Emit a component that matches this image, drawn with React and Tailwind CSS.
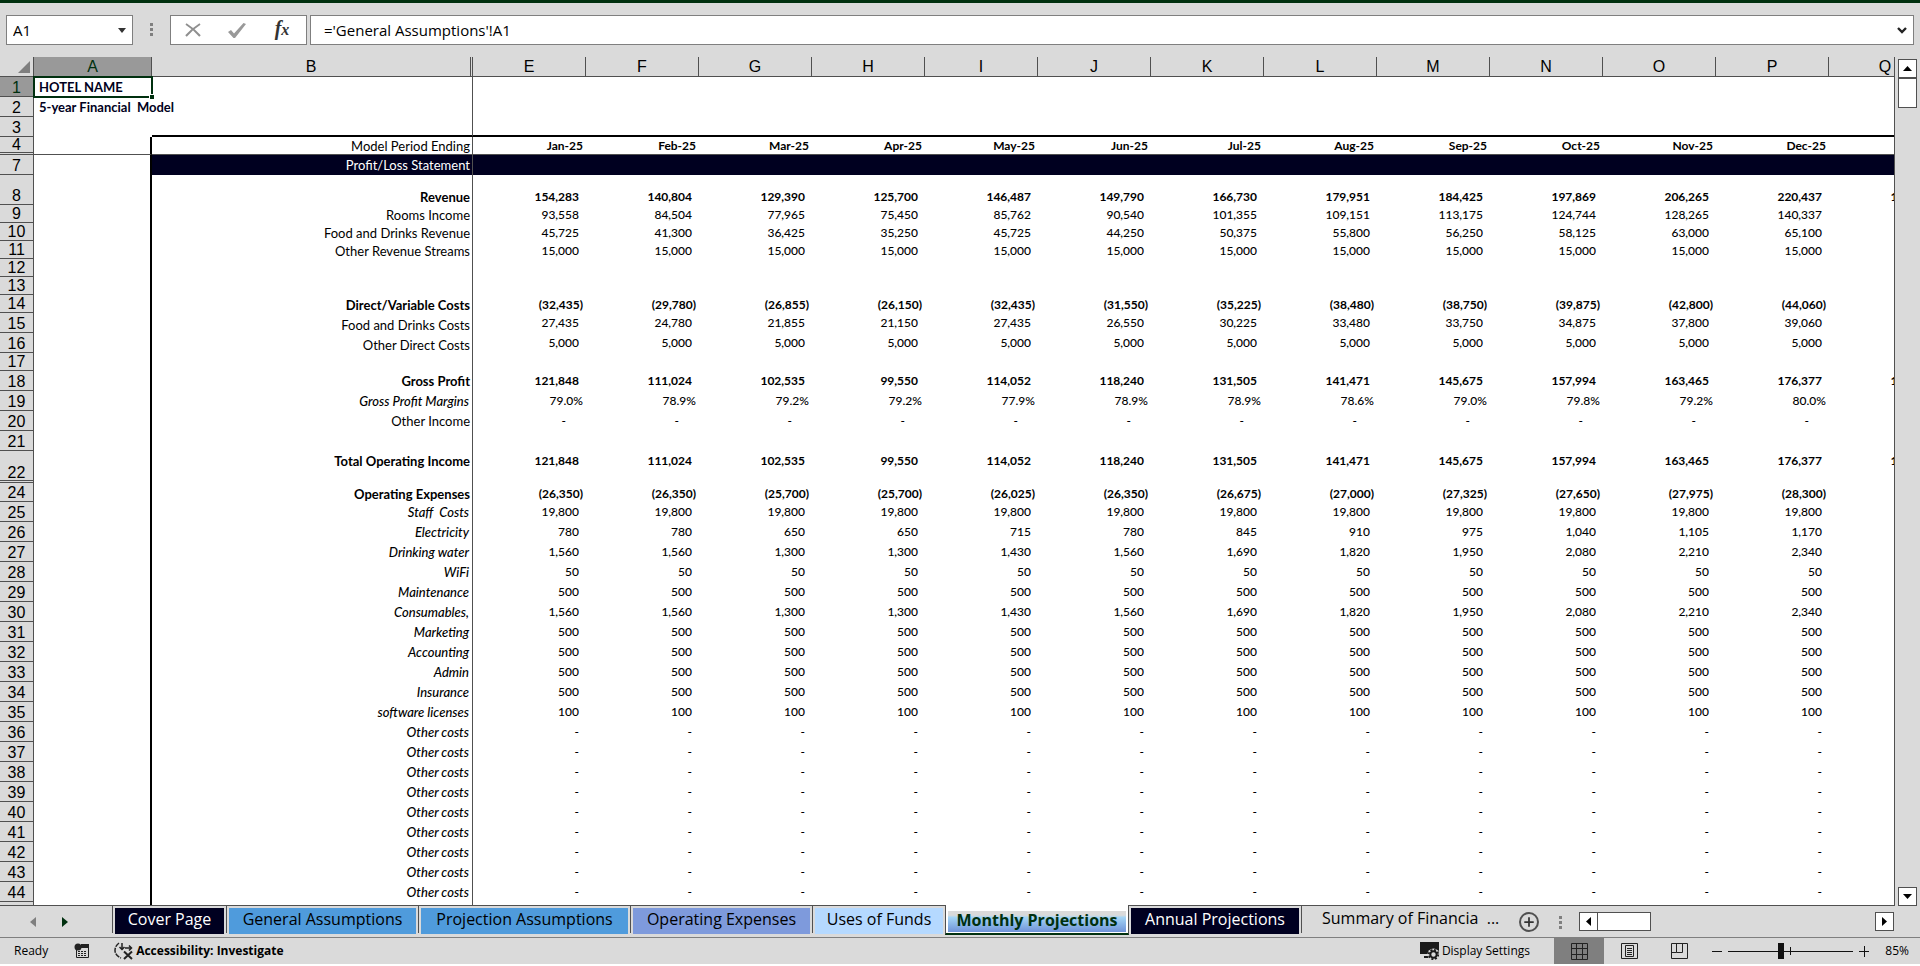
import { Plus } from 'lucide-react';

const COLUMNS = ['E', 'F', 'G', 'H', 'I', 'J', 'K', 'L', 'M', 'N', 'O', 'P', 'Q'];
const MONTHS = ['Jan-25', 'Feb-25', 'Mar-25', 'Apr-25', 'May-25', 'Jun-25', 'Jul-25', 'Aug-25', 'Sep-25', 'Oct-25', 'Nov-25', 'Dec-25', ''];

const repeat = (value) => Array(12).fill(value);
const list = (text) => text.split(' ');

const PEOPLE = list('1,560 1,560 1,300 1,300 1,430 1,560 1,690 1,820 1,950 2,080 2,210 2,340');
const PROFIT = list('121,848 111,024 102,535 99,550 114,052 118,240 131,505 141,471 145,675 157,994 163,465 176,377');

const ROWS = [
  { n: 8, h: 'h-[30px]', label: 'Revenue', bold: true, values: [...list('154,283 140,804 129,390 125,700 146,487 149,790 166,730 179,951 184,425 197,869 206,265 220,437'), '161,997'] },
  { n: 9, h: 'h-[18px]', label: 'Rooms Income', values: list('93,558 84,504 77,965 75,450 85,762 90,540 101,355 109,151 113,175 124,744 128,265 140,337') },
  { n: 10, h: 'h-[18px]', label: 'Food and Drinks Revenue', values: list('45,725 41,300 36,425 35,250 45,725 44,250 50,375 55,800 56,250 58,125 63,000 65,100') },
  { n: 11, h: 'h-[18px]', label: 'Other Revenue Streams', values: repeat('15,000') },
  { n: 12, h: 'h-[18px]' },
  { n: 13, h: 'h-[18px]' },
  { n: 14, h: 'h-[18px]', label: 'Direct/Variable Costs', bold: true, values: [...list('(32,435) (29,780) (26,855) (26,150) (32,435) (31,550) (35,225) (38,480) (38,750) (39,875) (42,800) (44,060)'), '(34,057)'] },
  { n: 15, h: 'h-5', label: 'Food and Drinks Costs', raised: true, values: list('27,435 24,780 21,855 21,150 27,435 26,550 30,225 33,480 33,750 34,875 37,800 39,060') },
  { n: 16, h: 'h-5', label: 'Other Direct Costs', raised: true, values: repeat('5,000') },
  { n: 17, h: 'h-[18px]' },
  { n: 18, h: 'h-5', label: 'Gross Profit', bold: true, align: 'align-middle', values: [...PROFIT, '127,940'] },
  { n: 19, h: 'h-5', label: 'Gross Profit Margins', italic: true, values: list('79.0% 78.9% 79.2% 79.2% 77.9% 78.9% 78.9% 78.6% 79.0% 79.8% 79.2% 80.0%') },
  { n: 20, h: 'h-5', label: 'Other Income', inset: true, align: 'align-middle', values: repeat('-') },
  { n: 21, h: 'h-5' },
  { n: 22, h: 'h-8', label: 'Total Operating Income', bold: true, align: 'align-top pt-0.5', values: [...PROFIT, '127,940'] },
  { n: 24, h: 'h-[19px]', label: 'Operating Expenses', bold: true, values: [...list('(26,350) (26,350) (25,700) (25,700) (26,025) (26,350) (26,675) (27,000) (27,325) (27,650) (27,975) (28,300)'), '(27,667)'] },
  { n: 25, h: 'h-5', label: 'Staff  Costs', italic: true, values: repeat('19,800') },
  { n: 26, h: 'h-5', label: 'Electricity', italic: true, values: list('780 780 650 650 715 780 845 910 975 1,040 1,105 1,170') },
  { n: 27, h: 'h-5', label: 'Drinking water', italic: true, values: PEOPLE },
  { n: 28, h: 'h-5', label: 'WiFi', italic: true, values: repeat('50') },
  { n: 29, h: 'h-5', label: 'Maintenance', italic: true, values: repeat('500') },
  { n: 30, h: 'h-5', label: 'Consumables,', italic: true, values: PEOPLE },
  { n: 31, h: 'h-5', label: 'Marketing', italic: true, values: repeat('500') },
  { n: 32, h: 'h-5', label: 'Accounting', italic: true, values: repeat('500') },
  { n: 33, h: 'h-5', label: 'Admin', italic: true, values: repeat('500') },
  { n: 34, h: 'h-5', label: 'Insurance', italic: true, values: repeat('500') },
  { n: 35, h: 'h-5', label: 'software licenses', italic: true, values: repeat('100') },
  ...[36, 37, 38, 39, 40, 41, 42, 43, 44].map((n) => ({ n, h: 'h-5', label: 'Other costs', italic: true, values: repeat('-') })),
];

const TABS = [
  { name: 'Cover Page', style: 'w-[109px] bg-[#000020] text-white' },
  { name: 'General Assumptions', style: 'w-[187px] bg-[#4f9bdc]' },
  { name: 'Projection Assumptions', style: 'w-[207px] bg-[#4f9bdc]' },
  { name: 'Operating Expenses', style: 'w-[177px] bg-[#7e9adc]' },
  { name: 'Uses of Funds', style: 'w-[128px] bg-[#b5d9ff]' },
];

export default function App() {
  return (
    <div className="flex h-screen flex-col overflow-hidden bg-[#dadada] font-['Open_Sans',sans-serif] text-black">
      <div className="h-[3px] shrink-0 bg-[#00300f]" />
      <FormulaBar />
      <div className="flex min-h-0 flex-1">
        <main className="min-w-0 flex-1 overflow-hidden border-r border-b border-[#505050] bg-white">
          <Sheet />
        </main>
        <VerticalScroll />
      </div>
      <SheetTabs />
      <StatusBar />
    </div>
  );
}

function FormulaBar() {
  return (
    <div className="flex shrink-0 items-center pt-3 pr-1.5 pb-3 pl-1.5">
      <div className="flex h-[30px] w-[127px] items-center border border-[#7f7f7f] bg-white pr-1.5 pl-1.5">
        <input aria-label="Name box" defaultValue="A1" className="w-full min-w-0 text-[15px] outline-none" />
        <button aria-label="Show names">
          <svg width="8" height="5" viewBox="0 0 8 5"><path d="M0 0h8L4 5z" fill="#333" /></svg>
        </button>
      </div>
      <Dots className="mx-[17px]" />
      <div className="flex h-[30px] w-[137px] items-center justify-between border border-[#7f7f7f] bg-white px-3.5">
        <button aria-label="Cancel">
          <svg width="16" height="14" viewBox="0 0 16 14" fill="none" stroke="#8f8f8f" strokeWidth="2"><path d="M1 1q8 5 14 12M15 1Q7 6 1 13" /></svg>
        </button>
        <button aria-label="Enter">
          <svg width="18" height="15" viewBox="0 0 18 15"><path d="M0 9l3-2 3 3.500L15.500 0 18 1 7 15H5.500z" fill="#999" /></svg>
        </button>
        <button aria-label="Insert function" className="w-5 font-['Liberation_Serif',serif] text-xl leading-5 font-bold text-[#333] italic">
          f<span className="text-base">x</span>
        </button>
      </div>
      <div className="ml-[3px] flex h-[30px] flex-1 items-center border border-[#7f7f7f] bg-white pr-1.5 pl-[13px]">
        <input aria-label="Formula" defaultValue="='General Assumptions'!A1" className="min-w-0 flex-1 text-[15px] outline-none" />
        <button aria-label="Expand formula bar">
          <svg width="10" height="7" viewBox="0 0 10 7"><path d="M1 1l4 4 4-4" fill="none" stroke="#222" strokeWidth="2.4" /></svg>
        </button>
      </div>
    </div>
  );
}

function Dots({ className }) {
  return (
    <svg width="3" height="14" viewBox="0 0 3 14" className={className}>
      <path d="M0 0h3v3H0zM0 5h3v3H0zM0 10h3v3H0z" fill="#7f7f7f" />
    </svg>
  );
}

function RowHeader({ n, active, double }) {
  return (
    <th
      scope="row"
      className={`border-r border-[#505050] p-0 align-bottom font-['Liberation_Sans',sans-serif] text-base font-normal ${active ? 'bg-[#999] text-[#00300f]' : 'bg-[#dadada]'} ${double ? 'border-b-[3px] [border-bottom-style:double] leading-[15px]' : 'border-b leading-[17px]'}`}
    >
      {n}
    </th>
  );
}

function Sheet() {
  return (
    <table className="w-[1942px] table-fixed border-separate border-spacing-0 font-[Lato,sans-serif] text-[13px] leading-4">
      <colgroup>
        <col className="w-[34px]" />
        <col className="w-[118px]" />
        <col className="w-[321px]" />
        {COLUMNS.map((c) => <col key={c} className="w-[113px]" />)}
      </colgroup>
      <thead className="font-['Liberation_Sans',sans-serif] text-base leading-[19px]">
        <tr className="h-5 bg-[#dadada]">
          <th aria-label="Select all" className="border-r border-b border-[#505050] p-0">
            <svg width="12" height="12" viewBox="0 0 12 12" className="ml-[18px]"><path d="M12 0v12H0z" fill="#7f7f7f" /></svg>
          </th>
          <th className="border-r border-b border-[#505050] bg-[#999] p-0 font-normal text-[#00300f]">A</th>
          <th className="border-r-[3px] border-b border-double border-[#505050] p-0 font-normal">B</th>
          {COLUMNS.map((c) => <th key={c} className="border-r border-b border-[#505050] p-0 font-normal">{c}</th>)}
        </tr>
      </thead>
      <tbody>
        <tr className="h-5">
          <RowHeader n={1} active />
          <td className="relative p-0 pl-[5px] font-bold text-[#000020] outline-2 -outline-offset-1 outline-[#00300f]">
            HOTEL NAME
            <span className="absolute -right-0.5 -bottom-0.5 size-[5px] border-t border-l border-white bg-[#00300f]" />
          </td>
          <td className="border-r border-[#505050] p-0" />
          <td colSpan={13} className="p-0" />
        </tr>
        <tr className="h-5">
          <RowHeader n={2} />
          <td colSpan={2} className="border-r border-[#505050] p-0 pl-[5px] font-bold whitespace-pre text-[#000020]">5-year Financial  Model</td>
          <td colSpan={13} className="p-0" />
        </tr>
        <tr className="h-5">
          <RowHeader n={3} />
          <td className="p-0" />
          <td className="border-r border-b-2 border-r-[#505050] border-b-black p-0" />
          <td colSpan={13} className="border-b-2 border-black p-0" />
        </tr>
        <tr className="h-[18px]">
          <RowHeader n={4} double />
          <td className="border-r-2 border-b border-r-black border-b-[#505050] p-0" />
          <td className="border-r border-b border-[#505050] p-0 pr-0.5 text-right">Model Period Ending</td>
          {MONTHS.map((m, i) => <td key={i} className="border-b border-[#505050] p-0 pr-[3px] text-right text-xs leading-4 font-bold">{m}</td>)}
        </tr>
        <tr className="h-5">
          <RowHeader n={7} />
          <td className="border-r-2 border-black p-0" />
          <td className="border-r border-[#505050] bg-[#000020] p-0 pr-0.5 text-right text-white">Profit/Loss Statement</td>
          <td colSpan={13} className="bg-[#000020] p-0" />
        </tr>
        {ROWS.map((row) => <Row key={row.n} row={row} />)}
        <tr className="h-5">
          <RowHeader />
          <td className="border-r-2 border-black p-0" />
          <td className="border-r border-[#505050] p-0" />
          <td colSpan={13} className="p-0" />
        </tr>
      </tbody>
    </table>
  );
}

function Row({ row }) {
  const { n, h, label, bold, italic, raised, inset, values = [] } = row;
  const align = row.align ?? (italic ? 'align-middle' : 'align-bottom');
  return (
    <tr className={`${h} ${bold ? 'font-bold' : ''}`}>
      <RowHeader n={n} double={n === 22} />
      <td className="border-r-2 border-black p-0" />
      <td className={`border-r border-[#505050] pb-0 pl-0 text-right whitespace-pre ${align} ${italic ? 'pr-[3px] font-medium italic' : 'pr-0.5'}`}>{label}</td>
      {COLUMNS.map((c, i) => {
        const value = values[i] ?? '';
        const wide = value.endsWith(')') || value.endsWith('%');
        const pad = inset ? 'pr-5' : wide ? 'pr-[3px]' : 'pr-[7px]';
        return <td key={c} className={`pb-0 pl-0 text-right text-xs leading-4 ${bold ? '' : 'font-medium'} ${pad} ${raised ? 'align-middle' : align}`}>{value}</td>;
      })}
    </tr>
  );
}

function VerticalScroll() {
  return (
    <div className="flex w-[25px] shrink-0 flex-col items-center pt-0.5">
      <button aria-label="Scroll up" className="flex h-[19px] w-[19px] items-center justify-center border border-[#505050] bg-white">
        <svg width="9" height="5" viewBox="0 0 9 5"><path d="M0 5h9L4.500 0z" /></svg>
      </button>
      <div className="h-[30px] w-[19px] border border-[#505050] bg-white" />
      <button aria-label="Scroll down" className="mt-auto flex h-[19px] w-[19px] items-center justify-center border border-[#505050] bg-white">
        <svg width="9" height="5" viewBox="0 0 9 5"><path d="M0 0h9L4.500 5z" /></svg>
      </button>
    </div>
  );
}

function SheetTabs() {
  return (
    <nav aria-label="Sheets" className="flex h-[31px] shrink-0 text-base leading-[22px]">
      <div className="flex w-28 shrink-0 items-center gap-[26px] pl-[30px]">
        <button aria-label="Previous sheets"><svg width="6" height="10" viewBox="0 0 6 10"><path d="M6 0v10L0 5z" fill="#7f7f7f" /></svg></button>
        <button aria-label="Next sheets"><svg width="6" height="10" viewBox="0 0 6 10"><path d="M0 0v10l6-5z" fill="#00300f" /></svg></button>
      </div>
      {TABS.map((tab) => (
        <div key={tab.name} className="mb-1 flex items-start border-l border-[#505050] pt-0.5 pr-0.5 pl-0.5">
          <button className={`h-[26px] pb-1 whitespace-nowrap ${tab.style}`}>{tab.name}</button>
        </div>
      ))}
      <button className="-mt-px h-[30px] w-[184px] shrink-0 border-x border-b-2 border-x-[#505050] border-b-[#00300f] bg-white px-0.5 pt-1.5 pb-px">
        <span className="flex h-full items-center justify-center bg-linear-to-b from-[#dadada] from-20% via-[#a5d5f5] via-30% to-[#6f93d8] pb-1 font-bold whitespace-nowrap text-[#00300f]">Monthly Projections</span>
      </button>
      <div className="mb-1 border-r border-[#505050] pt-0.5 pr-0.5 pl-0.5">
        <button className="h-[26px] w-[168px] bg-[#000020] pb-1 whitespace-nowrap text-white">Annual Projections</button>
      </div>
      <button className="h-[28px] pb-1 pl-5 whitespace-pre">Summary of Financia  ...</button>
      <button aria-label="New sheet" className="mt-1.5 ml-5 flex size-5 items-center justify-center rounded-full border-2 border-[#505050]"><Plus size={14} strokeWidth={3} color="#333" /></button>
      <Dots className="mt-2.5 ml-5" />
      <div className="mt-1.5 mr-[26px] ml-[17px] flex h-[19px] flex-1">
        <button aria-label="Scroll left" className="flex w-[19px] items-center justify-center border border-[#505050] bg-white"><svg width="5" height="9" viewBox="0 0 5 9"><path d="M5 0v9L0 4.500z" /></svg></button>
        <div className="w-[53px] border border-l-0 border-[#505050] bg-white" />
        <button aria-label="Scroll right" className="ml-auto flex w-[19px] items-center justify-center border border-[#505050] bg-white"><svg width="5" height="9" viewBox="0 0 5 9"><path d="M0 0v9l5-4.500z" /></svg></button>
      </div>
    </nav>
  );
}

function StatusBar() {
  return (
    <footer className="flex h-[29px] shrink-0 items-center border-t border-b-2 border-t-[#7f7f7f] border-b-white text-xs">
      <span className="pl-3.5">Ready</span>
      <button aria-label="Macro recording" className="ml-[26px]">
        <svg width="16" height="16" viewBox="0 0 16 16"><path d="M2.500 3.500h12v11h-12z" fill="none" stroke="#222" /><path d="M7 1h8v4H7z" fill="#222" /><circle cx="4" cy="4" r="3.500" fill="#222" /><path d="M4 8.500h9M4 10.500h9M4 12.500h9" stroke="#222" strokeDasharray="2 1" /></svg>
      </button>
      <button className="ml-6 flex items-center gap-0.5 font-bold">
        <svg width="20" height="18" viewBox="0 0 20 18" fill="none" stroke="#222" strokeWidth="1.500">
          <path d="M5 1Q1 4 1 8.500T7 16" strokeDasharray="5 1" />
          <path d="M8 1v6M5.500 5l2.500 2.500L10.500 5M11 6h6M15 3.500L17.500 6 15 8.500" />
          <path d="M10 9.500l8 7.500M18 9.500L10 17" strokeWidth="2" />
        </svg>
        Accessibility: Investigate
      </button>
      <button className="ml-auto flex items-center gap-0.5">
        <svg width="20" height="18" viewBox="0 0 20 18"><path d="M0 0h19v12H0zM4 14h6v2H4z" fill="#1a1a1a" /><circle cx="13.500" cy="12.500" r="6" fill="#dadada" /><circle cx="13.500" cy="12.500" r="3.200" fill="none" stroke="#1a1a1a" strokeWidth="2" /><circle cx="13.500" cy="12.500" r="4.700" fill="none" stroke="#1a1a1a" strokeWidth="1.800" strokeDasharray="2 1.690" /></svg>
        Display Settings
      </button>
      <div className="ml-6 flex h-full">
        <button aria-label="Normal view" className="flex w-[50px] items-center justify-center bg-[#7f7f7f]"><svg width="17" height="17" viewBox="0 0 17 17" fill="none" stroke="#222"><path d="M.5.5h16v16H.5zM5.500 0v17M11.500 0v17M0 5.500h17M0 11.500h17" /></svg></button>
        <button aria-label="Page layout view" className="flex w-[50px] items-center justify-center"><svg width="17" height="16" viewBox="0 0 17 16" fill="none" stroke="#222"><path d="M.5.5h16v15H.5zM4.500 2.500h8v11h-8zM6 5.500h5M6 7.500h5M6 9.500h5M6 11.500h5" /></svg></button>
        <button aria-label="Page break view" className="flex w-[50px] items-center justify-center"><svg width="17" height="16" viewBox="0 0 17 16" fill="none" stroke="#222"><path d="M.5.5h16v15H.5zM5.500 0v9.500h6V0M.5 9.500h5" /></svg></button>
      </div>
      <button aria-label="Zoom out" className="ml-2"><svg width="10" height="10" viewBox="0 0 10 10"><path d="M0 5.500h10" stroke="#111" /></svg></button>
      <Zoom />
      <button aria-label="Zoom in" className="ml-1.5"><svg width="10" height="11" viewBox="0 0 10 11"><path d="M0 5.500h10M5.500 0v11" stroke="#111" /></svg></button>
      <span className="w-[51px] pr-[11px] text-right">85%</span>
    </footer>
  );
}

function Zoom() {
  return (
    <input
      type="range"
      aria-label="Zoom"
      min="0"
      max="100"
      defaultValue="42"
      className="ml-1.5 h-4 w-[125px] appearance-none bg-[linear-gradient(#111,#111),linear-gradient(#111,#111)] bg-[length:100%_1px,1px_8px] bg-center bg-no-repeat [&::-webkit-slider-thumb]:h-4 [&::-webkit-slider-thumb]:w-1.5 [&::-webkit-slider-thumb]:appearance-none [&::-webkit-slider-thumb]:bg-[#111]"
    />
  );
}
